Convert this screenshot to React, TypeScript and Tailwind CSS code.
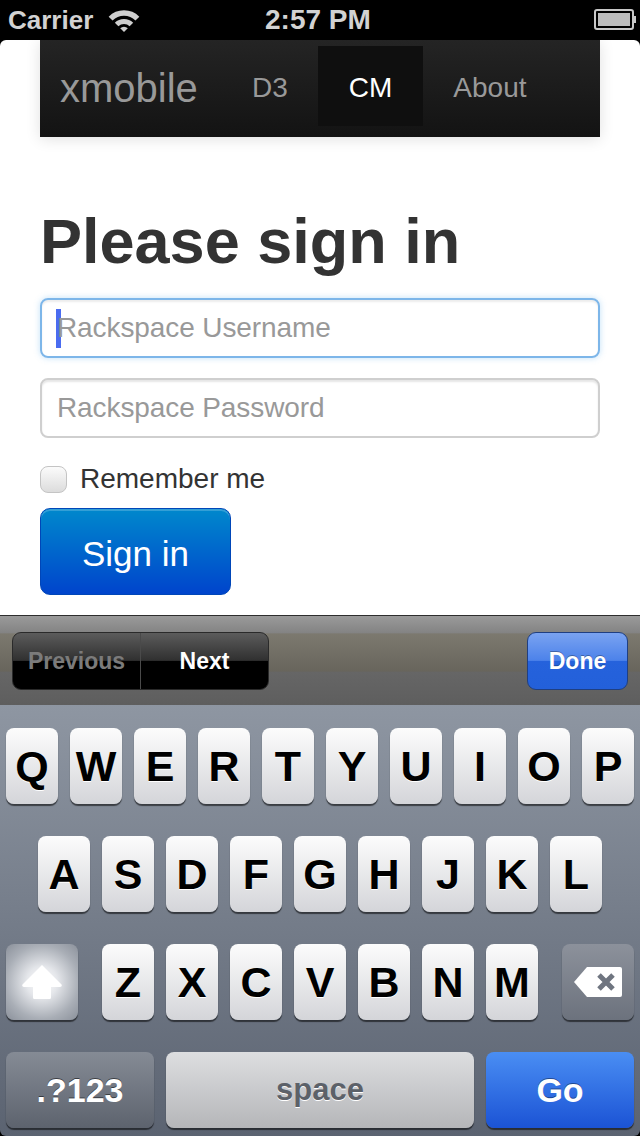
import React from 'react';

const font = "font-['Liberation_Sans',Arial,sans-serif]";

function Wifi(): React.JSX.Element {
  return (
    <svg width="32" height="22" viewBox="0 0 32 22" fill="none">
      <path d="M2.6 8.6 A19 19 0 0 1 29.4 8.6" stroke="#cfcfcf" strokeWidth="5.5" />
      <path d="M8.6 14.6 A10.5 10.5 0 0 1 23.4 14.6" stroke="#cfcfcf" strokeWidth="5" />
      <path d="M16 22 L12.2 18.2 A5.4 5.4 0 0 1 19.8 18.2 Z" fill="#cfcfcf" />
    </svg>
  );
}

function Battery(): React.JSX.Element {
  return (
    <svg width="44" height="22" viewBox="0 0 44 22">
      <rect x="1" y="1" width="38" height="19" rx="2" fill="none" stroke="#c8c8c8" strokeWidth="2" />
      <rect x="4" y="4" width="32" height="13" fill="#bdbdbd" />
      <rect x="39" y="7" width="3" height="7" fill="#c8c8c8" />
    </svg>
  );
}

function StatusBar(): React.JSX.Element {
  return (
    <div className="relative flex h-[40px] shrink-0 items-center bg-black px-[8px] font-bold text-[#d2d2d2]">
      <span className="text-[26px] leading-none">Carrier</span>
      <span className="ml-[15px] mt-[1px]">
        <Wifi />
      </span>
      <span className="absolute left-[265px] text-[28px] leading-none">2:57 PM</span>
      <span className="ml-auto mr-[-6px]">
        <Battery />
      </span>
    </div>
  );
}

function Navbar(): React.JSX.Element {
  return (
    <nav className="mx-[40px] flex h-[97px] shrink-0 items-start bg-[linear-gradient(to_bottom,#242424,#131313)] pt-[6px] shadow-[0_2px_14px_rgba(0,0,0,0.12)]">
      <div className="flex h-[80px] w-[182px] items-center pl-[20px] pt-[4px] text-[40px] text-[#999]">xmobile</div>
      <div className="flex h-[80px] items-center px-[30px] pt-[3px] text-[28px] text-[#999]">D3</div>
      <div className="flex h-[80px] items-center bg-[#0f0f0f] px-[31px] pt-[3px] text-[28px] text-white">CM</div>
      <div className="flex h-[80px] items-center px-[30px] pt-[3px] text-[28px] text-[#999]">About</div>
    </nav>
  );
}

function SignInForm(): React.JSX.Element {
  return (
    <div className="flex flex-col px-[40px]">
      <h2 className="mt-[73px] text-[63px] font-bold leading-[63px] text-[#333]">Please sign in</h2>
      <div className="mt-[25px] flex h-[60px] items-center rounded-[8px] border-2 border-[#7db6e9] pl-[14px] shadow-[inset_0_2px_2px_rgba(0,0,0,0.08),0_0_6px_rgba(82,168,236,0.35)]">
        <span className="mr-[-4px] h-[39px] w-[5px] shrink-0 bg-[#4a6cf0]" />
        <span className="text-[28px] tracking-[-0.1px] text-[#999]">Rackspace Username</span>
      </div>
      <div className="mt-[20px] flex h-[60px] items-center rounded-[8px] border-2 border-[#cfcfcf] pl-[15px] shadow-[inset_0_2px_2px_rgba(0,0,0,0.1)]">
        <span className="text-[28px] tracking-[-0.1px] text-[#999]">Rackspace Password</span>
      </div>
      <div className="mt-[27px] flex h-[28px] items-center gap-[13px]">
        <span className="h-[27px] w-[27px] rounded-[8px] border border-[#c4c4c4] bg-[linear-gradient(to_bottom,#fbfbfb,#dcdcdc)]" />
        <span className="text-[28px] text-[#333]">Remember me</span>
      </div>
      <button className="mt-[15px] flex h-[87px] w-[191px] items-center justify-center rounded-[10px] border border-[#0046b8] bg-[linear-gradient(to_bottom,#0088cc,#0044cc)] pt-[5px] text-[35px] text-white shadow-[inset_0_2px_0_rgba(255,255,255,0.2)]">
        Sign in
      </button>
    </div>
  );
}

function AccessoryBar(): React.JSX.Element {
  return (
    <div className="flex h-[90px] shrink-0 items-center border-t border-[#2e2e2e] bg-[linear-gradient(to_bottom,#9a9a9a_0%,#838383_19%,#7c796f_20%,#68655c_62%,#666666_63%,#5e5e5e_100%)] px-[12px] pt-[1px]">
      <div className="flex h-[58px] w-[257px] overflow-hidden rounded-[9px] border border-[#2a2a2a] bg-[linear-gradient(to_bottom,#5c5c5c_0%,#303030_49%,#000_50%,#000_100%)] text-[23px] font-bold">
        <div className="flex w-[128px] items-center justify-center border-r border-[#4a4a4a] text-[#7b7b7b]">Previous</div>
        <div className="flex flex-1 items-center justify-center text-white">Next</div>
      </div>
      <div className="ml-auto flex h-[58px] w-[101px] items-center justify-center rounded-[9px] border border-[#1f3f82] bg-[linear-gradient(to_bottom,#7aa3f1_0%,#4c82ea_49%,#2562dc_50%,#2360da_100%)] text-[23px] font-bold text-white [text-shadow:0_-1px_0_rgba(0,0,0,0.3)]">
        Done
      </div>
    </div>
  );
}

const keyBase = 'flex h-[76px] items-center justify-center rounded-[8px] shadow-[0_2px_1px_rgba(0,0,0,0.55)]';
const letterKey = `${keyBase} w-[52px] bg-[linear-gradient(to_bottom,#fcfcfc,#d4d5d9)] text-[43px] font-bold text-black [text-shadow:0_1px_0_#fff]`;

function LetterRow(props: { keys: string[] }): React.JSX.Element {
  return (
    <>
      {props.keys.map((k) => (
        <div key={k} className={letterKey}>
          {k}
        </div>
      ))}
    </>
  );
}

function Keyboard(): React.JSX.Element {
  return (
    <div className="flex flex-1 flex-col gap-[32px] rounded-b-[6px] bg-[linear-gradient(to_bottom,#8e96a2,#5b6371)] px-[6px] pt-[23px]">
      <div className="flex gap-[12px]">
        <LetterRow keys={['Q', 'W', 'E', 'R', 'T', 'Y', 'U', 'I', 'O', 'P']} />
      </div>
      <div className="flex justify-center gap-[12px]">
        <LetterRow keys={['A', 'S', 'D', 'F', 'G', 'H', 'J', 'K', 'L']} />
      </div>
      <div className="flex gap-[12px]">
        <div className={`${keyBase} mr-[12px] w-[72px] bg-[radial-gradient(circle_at_50%_50%,#ffffff_0%,#e4e6ea_30%,#a9aeb6_70%,#8a909a_100%)]`}>
          <svg width="40" height="34" viewBox="0 0 40 34">
            <path
              d="M20 0 L39.5 19.5 Q40.5 21.5 38 22 L29 22 L29 32.5 Q29 34 27.5 34 L12.5 34 Q11 34 11 32.5 L11 22 L2 22 Q-0.5 21.5 0.5 19.5 Z"
              fill="#fff"
            />
          </svg>
        </div>
        <LetterRow keys={['Z', 'X', 'C', 'V', 'B', 'N', 'M']} />
        <div className={`${keyBase} ml-[12px] w-[72px] bg-[linear-gradient(to_bottom,#8c919b,#6c727d)]`}>
          <svg width="50" height="32" viewBox="0 0 50 32">
            <path d="M14 1 L47 1 Q49 1 49 3 L49 29 Q49 31 47 31 L14 31 L1 16 Z" fill="#fff" />
            <path d="M26 9 L40 23 M40 9 L26 23" stroke="#6f7580" strokeWidth="5" />
          </svg>
        </div>
      </div>
      <div className="flex gap-[12px]">
        <div className={`${keyBase} w-[148px] bg-[linear-gradient(to_bottom,#858b95,#5d636e)] text-[34px] font-bold text-white [text-shadow:0_-1px_0_rgba(0,0,0,0.5)]`}>
          .?123
        </div>
        <div className={`${keyBase} w-[308px] bg-[linear-gradient(to_bottom,#dddee0,#b5b6b9)] text-[31px] font-bold text-[#5c6169] [text-shadow:0_1px_0_#fff]`}>
          space
        </div>
        <div className={`${keyBase} w-[148px] bg-[linear-gradient(to_bottom,#4a8ef3,#1b53d5)] text-[34px] font-bold text-white [text-shadow:0_-1px_0_rgba(0,0,0,0.4)]`}>
          Go
        </div>
      </div>
    </div>
  );
}

export default function App(): React.JSX.Element {
  return (
    <div className={`flex h-[1136px] w-[640px] flex-col overflow-hidden bg-black ${font}`}>
      <StatusBar />
      <div className="flex h-[575px] shrink-0 flex-col rounded-t-[6px] bg-white">
        <Navbar />
        <SignInForm />
      </div>
      <AccessoryBar />
      <Keyboard />
    </div>
  );
}
